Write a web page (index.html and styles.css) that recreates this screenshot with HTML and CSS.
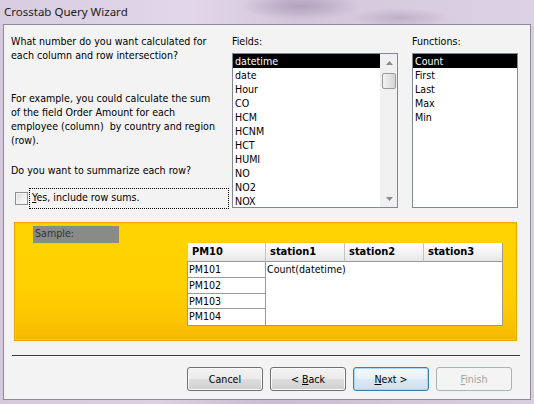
FILE: index.html
```
<!DOCTYPE html>
<html>
<head>
<meta charset="utf-8">
<link rel="stylesheet" href="styles.css">
</head>
<body>
<div class="window">
  <div class="titlebar"><span class="title">Crosstab Query Wizard</span></div>
  <div class="client">
    <div class="top">
      <div class="intro">
        <p class="q1">What number do you want calculated for<br>each column and row intersection?</p>
        <p class="q2">For example, you could calculate the sum<br>of the field Order Amount for each<br>employee (column)&nbsp; by country and region<br>(row).</p>
        <p class="q3">Do you want to summarize each row?</p>
        <div class="chk"><span class="box"></span><span class="focus"><u>Y</u>es, include row sums.</span></div>
      </div>
      <div class="fields">
        <div class="lbl">Fields:</div>
        <div class="listbox fieldlist">
          <ul class="items">
            <li class="sel">datetime</li>
            <li>date</li>
            <li>Hour</li>
            <li>CO</li>
            <li>HCM</li>
            <li>HCNM</li>
            <li>HCT</li>
            <li>HUMI</li>
            <li>NO</li>
            <li>NO2</li>
            <li>NOX</li>
          </ul>
          <div class="scrollbar">
            <div class="arrow up"><svg width="7" height="4" viewBox="0 0 7 4"><path d="M0 4 L3.5 0 L7 4 Z" fill="#8a8a8a"/></svg></div>
            <div class="thumb"></div>
            <div class="track"></div>
            <div class="arrow down"><svg width="7" height="4" viewBox="0 0 7 4"><path d="M0 0 L3.5 4 L7 0 Z" fill="#8a8a8a"/></svg></div>
          </div>
        </div>
      </div>
      <div class="functions">
        <div class="lbl">Functions:</div>
        <div class="listbox funclist">
          <ul class="items">
            <li class="sel">Count</li>
            <li>First</li>
            <li>Last</li>
            <li>Max</li>
            <li>Min</li>
          </ul>
        </div>
      </div>
    </div>
    <div class="sample">
      <div class="samplelbl">Sample:</div>
      <div class="grid">
        <div class="hd">PM10</div>
        <div class="hd">station1</div>
        <div class="hd">station2</div>
        <div class="hd last">station3</div>
        <div class="rh r1">PM101</div>
        <div class="rh r2">PM102</div>
        <div class="rh r3">PM103</div>
        <div class="rh r4">PM104</div>
        <div class="data">Count(datetime)</div>
      </div>
    </div>
    <div class="sep"></div>
    <div class="buttons">
      <div class="btn">Cancel</div>
      <div class="btn">&lt; <u>B</u>ack</div>
      <div class="btn default"><u>N</u>ext &gt;</div>
      <div class="btn disabled"><u>F</u>inish</div>
    </div>
  </div>
</div>
</body>
</html>
```
FILE: styles.css
```
* { box-sizing: border-box; }
html, body { margin: 0; padding: 0; }
body {
  width: 534px;
  height: 404px;
  overflow: hidden;
  background: #cfc4d8;
  font-family: "DejaVu Sans Condensed", "DejaVu Sans", sans-serif;
  font-size: 10.6px;
  color: #000;
}
.window {
  width: 534px;
  height: 404px;
  background: linear-gradient(90deg, #d6c9dd 0%, #dccfe2 30%, #c9bcd3 50%, #d3c6da 75%, #d9cee0 100%);
}
.titlebar {
  height: 24px;
  padding-left: 4px;
  background:
    radial-gradient(ellipse 60px 14px at 300px 6px, rgba(150,130,160,0.55), rgba(150,130,160,0)),
    radial-gradient(ellipse 50px 10px at 400px 18px, rgba(160,140,170,0.45), rgba(160,140,170,0)),
    linear-gradient(90deg, #d8cde0 0%, #e2d7e8 35%, #d3c6dc 55%, #ddd2e4 100%);
}
.title {
  display: block;
  font-family: "Noto Sans", "Open Sans", sans-serif;
  font-size: 11.5px;
  line-height: 24px;
  color: #1a1a1a;
}
.client {
  margin: 0 3px;
  height: 376px;
  border: 1px solid #8e8a96;
  background: #f3f3f3;
}
.top {
  height: 197px;
  padding: 9px 0 0 7px;
  display: grid;
  grid-template-columns: 221px 180px 106px;
}
.intro p { margin: 0; line-height: 14px; }
.q2 { margin-top: 29px !important; }
.q3 { margin-top: 16px !important; }
.chk {
  display: flex;
  align-items: center;
  margin-top: 11px;
  margin-left: 4px;
}
.box {
  width: 13px;
  height: 13px;
  border: 1px solid #8e8f8f;
  background: linear-gradient(135deg, #dcdcdc, #ffffff);
  box-shadow: inset 0 0 0 1px #f4f4f4;
}
.focus {
  margin-left: 1px;
  width: 200px;
  height: 21px;
  border: 1px dotted #000;
  padding-left: 2px;
  line-height: 17px;
}
.lbl { line-height: 14px; }
.listbox {
  margin-top: 5px;
  height: 155px;
  border: 1px solid #828790;
  background: #fff;
  display: flex;
}
.fieldlist { width: 166px; }
.funclist { width: 106px; }
.items {
  list-style: none;
  margin: 0;
  padding: 0;
  flex: 1;
}
.items li {
  height: 14px;
  line-height: 14px;
  padding-left: 2px;
}
.items li.sel { background: #000; color: #fff; }
.scrollbar {
  width: 17px;
  display: flex;
  flex-direction: column;
  background: #f0f0f0;
  border-left: 1px solid #f0f0f0;
}
.arrow {
  height: 17px;
  display: flex;
  align-items: center;
  justify-content: center;
}
.thumb {
  margin: 2px 1px 0 1px;
  height: 16px;
  border: 1px solid #9a9a9a;
  border-radius: 2px;
  background: linear-gradient(90deg, #f3f3f3, #e4e4e4 50%, #d4d4d4);
}
.track { flex: 1; }
.sample {
  margin: 0 0 0 10px;
  width: 503px;
  height: 119px;
  border: 1px solid #e9a700;
  background: linear-gradient(180deg, #ffd300 0%, #ffd000 55%, #fcc600 82%, #f6b700 100%);
  box-shadow: inset 0 0 0 1px #ffc800;
}
.samplelbl {
  margin: 3px 0 0 18px;
  width: 86px;
  height: 17px;
  background: #8a8a86;
  color: #333;
  padding-left: 2px;
  line-height: 14px;
}
.grid {
  margin-left: 172px;
  width: 316px;
  display: grid;
  grid-template-columns: 79px 79px 79px 79px;
  grid-template-rows: 19px 16px 16px 15px 17px;
}
.hd {
  font-weight: bold;
  font-size: 11px;
  background: linear-gradient(180deg, #ffffff 0%, #f4f4f4 50%, #e6e6e6 100%);
  border-right: 1px solid #c4c4c4;
  border-bottom: 1px solid #9a9a9a;
  padding-left: 4px;
  line-height: 18px;
}
.hd:first-child { border-left: 1px solid #c8c8c8; }
.hd.last { border-right: 1px solid #9a9a9a; }
.rh {
  background: #fff;
  border-left: 1px solid #9a9a9a;
  border-right: 1px solid #9a9a9a;
  border-bottom: 1px solid #9a9a9a;
  padding-left: 1px;
  line-height: 15px;
  grid-column: 1;
}
.r1 { grid-row: 2; }
.r2 { grid-row: 3; }
.r3 { grid-row: 4; }
.r4 { grid-row: 5; }
.data {
  grid-column: 2 / 5;
  grid-row: 2 / 6;
  background: #fff;
  border-right: 1px solid #9a9a9a;
  border-bottom: 1px solid #9a9a9a;
  padding-left: 1px;
  line-height: 14px;
}
.sep {
  margin: 14px 0 0 8px;
  width: 508px;
  height: 2px;
  border-top: 1px solid #3a3a3a;
  border-bottom: 1px solid #ffffff;
}
.buttons {
  margin-top: 10px;
  padding-left: 183px;
  display: flex;
  gap: 7px;
}
.btn {
  width: 76px;
  height: 24px;
  border: 1px solid #707070;
  border-radius: 3px;
  background: linear-gradient(180deg, #f2f2f2 0%, #ebebeb 48%, #dddddd 52%, #cfcfcf 100%);
  box-shadow: inset 0 0 0 1px #fbfbfb;
  text-align: center;
  line-height: 22px;
}
.btn.default {
  border-color: #3c7fb1;
  background: linear-gradient(180deg, #f3f8fb 0%, #e8f1f8 48%, #dbe8f3 52%, #cfe0ee 100%);
  box-shadow: inset 0 0 0 1px #a9d6f3;
}
.btn.disabled {
  border-color: #adb2b5;
  background: #f4f4f4;
  box-shadow: none;
  color: #a3a3a3;
}
```
